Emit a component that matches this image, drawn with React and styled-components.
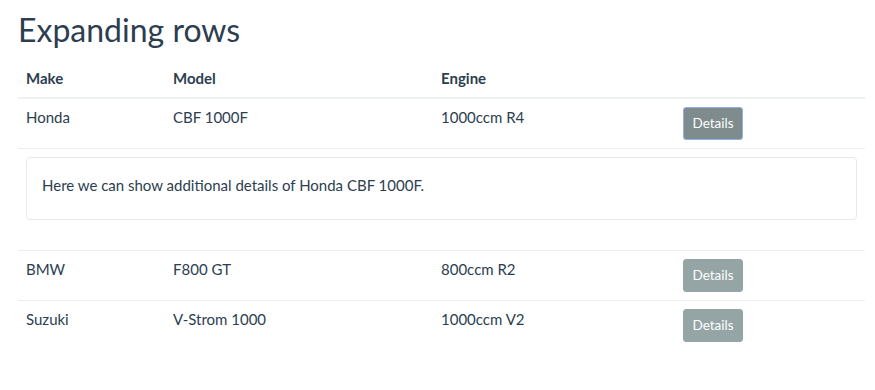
import React, { useState } from 'react';
import styled, { createGlobalStyle } from 'styled-components';

const GlobalStyle = createGlobalStyle`
  body {
    margin: 0;
    background: #ffffff;
    font-family: Lato, "Open Sans", sans-serif;
    font-size: 15px;
    color: #2c3e50;
  }
`;

const bikes = [
  { make: 'Honda', model: 'CBF 1000F', engine: '1000ccm R4' },
  { make: 'BMW', model: 'F800 GT', engine: '800ccm R2' },
  { make: 'Suzuki', model: 'V-Strom 1000', engine: '1000ccm V2' }
];

const Page = styled.div`
  padding: 0 10px 0 18px;
`;

const Title = styled.h2`
  margin: 12px 0 13px;
  font-size: 32px;
  font-weight: 400;
  line-height: 1.1;
`;

const Table = styled.table`
  width: 847px;
  border-collapse: collapse;
  border-spacing: 0;
`;

const Th = styled.th`
  text-align: left;
  font-weight: 700;
  padding: 8px;
  line-height: 21px;
  border-bottom: 2px solid #ecf0f1;
  width: ${props => props.w || 'auto'};
`;

const Td = styled.td`
  padding: 8px;
  line-height: 20px;
  vertical-align: top;
  border-top: 1px solid #ecf0f1;
  height: 33px;
`;

const DetailCell = styled.td`
  padding: 8px 8px 30px;
  border-top: 1px solid #ecf0f1;
`;

const Card = styled.div`
  border: 1px solid #e6eaeb;
  border-radius: 4px;
  padding: 15px 15px 22px;
  line-height: 24px;
`;

const Button = styled.button`
  display: block;
  font-family: inherit;
  font-size: 13.5px;
  line-height: 18px;
  color: #ffffff;
  background: ${props => (props.active ? '#7f8c8d' : '#95a5a6')};
  border: 1px solid ${props => (props.active ? '#8fb3dc' : '#95a5a6')};
  border-radius: 3px;
  padding: 6px 0 7px;
  width: 60px;
  margin: 0;
  cursor: pointer;
`;

function App() {
  const [open, setOpen] = useState(0);

  return (
    <Page>
      <GlobalStyle />
      <Title>Expanding rows</Title>
      <Table>
        <thead>
          <tr>
            <Th w="131px">Make</Th>
            <Th w="252px">Model</Th>
            <Th w="226px">Engine</Th>
            <Th />
          </tr>
        </thead>
        <tbody>
          {bikes.map((bike, index) => (
            <React.Fragment key={index}>
              <tr>
                <Td>{bike.make}</Td>
                <Td>{bike.model}</Td>
                <Td>{bike.engine}</Td>
                <Td>
                  <Button
                    active={open === index}
                    onClick={() => setOpen(open === index ? -1 : index)}
                  >
                    Details
                  </Button>
                </Td>
              </tr>
              {open === index && (
                <tr>
                  <DetailCell colSpan={4}>
                    <Card>
                      Here we can show additional details of {bike.make} {bike.model}.
                    </Card>
                  </DetailCell>
                </tr>
              )}
            </React.Fragment>
          ))}
        </tbody>
      </Table>
    </Page>
  );
}

export default App;
